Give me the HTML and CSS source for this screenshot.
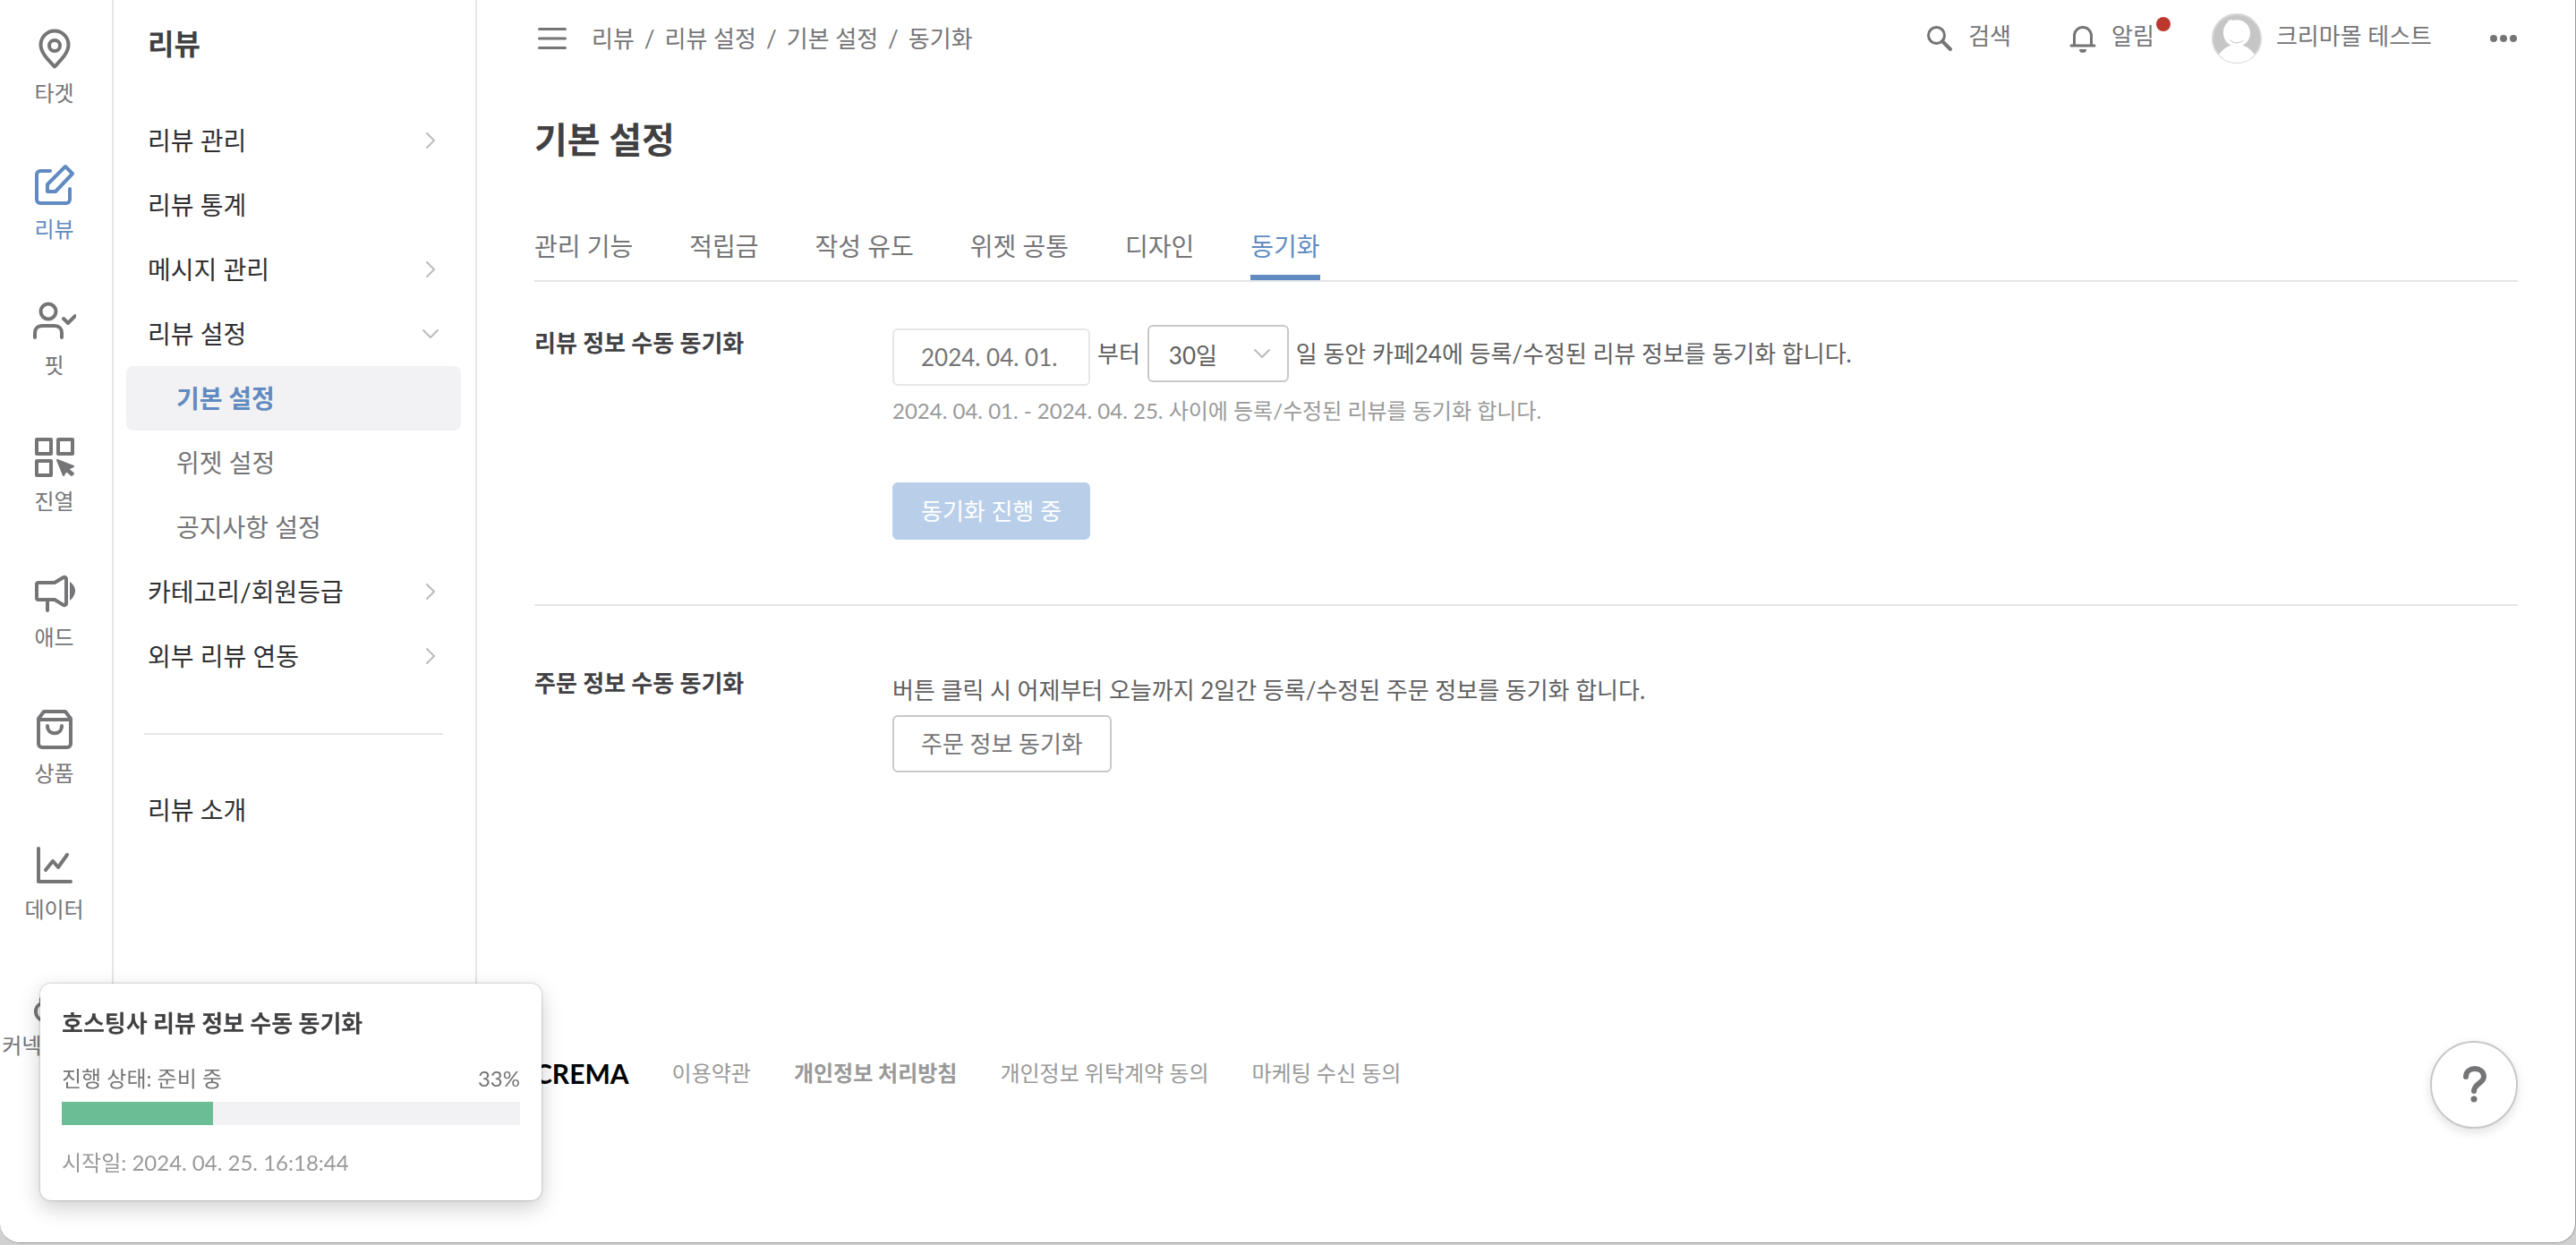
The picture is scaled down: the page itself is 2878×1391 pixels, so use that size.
FILE: index.html
```
<!DOCTYPE html>
<html lang="ko">
<head>
    <meta charset="UTF-8">
    <meta name="viewport" content="width=device-width, initial-scale=1.0">
    <title>기본 설정 - CREMA</title>
    <link rel="stylesheet" href="styles.css">
</head>
<body>
    <div class="window">
        <nav class="rail">
            <a class="rail-item" href="#">
                <svg class="rail-icon" viewBox="0 0 48 48"><path d="M24 44.500C17 37 8.500 29 8.500 20a15.500 15.500 0 0 1 31 0c0 9-8.500 17-15.500 24.500z"/><circle cx="24" cy="21" r="6"/></svg>
                타겟
            </a>
            <a class="rail-item active" href="#">
                <svg class="rail-icon" viewBox="0 0 48 48"><path d="M19 9H8a4 4 0 0 0-4 4v28a4 4 0 0 0 4 4h29a4 4 0 0 0 4-4V29"/><path d="M36 4l8 8-19 20h-9v-8z"/></svg>
                리뷰
            </a>
            <a class="rail-item" href="#">
                <svg class="rail-icon" viewBox="0 0 48 48"><circle cx="17" cy="14" r="8.500"/><path d="M2 43v-5c0-5 3-8 8-8h14c5 0 8 3 8 8v5M34 22l5 5 8-8"/></svg>
                핏
            </a>
            <a class="rail-item" href="#">
                <svg class="rail-icon" viewBox="0 0 48 48"><path d="M4 5h16v16H4zM28 5h16v16H28zM4 29h16v16H4z"/><path class="solid" d="M27 28l18 7-6 3 6 5-2 2-6-5-3 5z"/></svg>
                진열
            </a>
            <a class="rail-item" href="#">
                <svg class="rail-icon" viewBox="0 0 48 48"><path d="M24 13H6a2 2 0 0 0-2 2v15a2 2 0 0 0 2 2h18l10 6a2 2 0 0 0 3-2V9a2 2 0 0 0-3-2zM16 32v12"/><path class="fill" d="M41 12c3 2 6 6 6 10s-3 9-6 11z"/></svg>
                애드
            </a>
            <a class="rail-item" href="#">
                <svg class="rail-icon" viewBox="0 0 48 48"><path d="M6 13v28a4 4 0 0 0 4 4h28a4 4 0 0 0 4-4V13l-6-8H12zM6 14h36"/><path d="M16 21c0 11 16 11 16 0"/></svg>
                상품
            </a>
            <a class="rail-item" href="#">
                <svg class="rail-icon" viewBox="0 0 48 48"><path d="M6 6v37h36M14 30l8-10 6 7 10-14"/></svg>
                데이터
            </a>
            <a class="rail-item" href="#">
                <svg class="rail-icon" viewBox="0 0 48 48"><path d="M9 22v5a10 10 0 0 0 2 19h26a10 10 0 0 0 2-19v-5"/></svg>
                커넥트 채널
            </a>
        </nav>

        <nav class="menu">
            <h2 class="menu-title">리뷰</h2>
            <a class="menu-item" href="#">리뷰 관리 <svg class="chevron" viewBox="0 0 20 20"><path d="M6 2l8 8-8 8"/></svg></a>
            <a class="menu-item" href="#">리뷰 통계</a>
            <a class="menu-item" href="#">메시지 관리 <svg class="chevron" viewBox="0 0 20 20"><path d="M6 2l8 8-8 8"/></svg></a>
            <a class="menu-item" href="#">리뷰 설정 <svg class="chevron" viewBox="0 0 20 20"><path d="M2 6l8 8 8-8"/></svg></a>
            <a class="menu-item sub active" href="#">기본 설정</a>
            <a class="menu-item sub" href="#">위젯 설정</a>
            <a class="menu-item sub" href="#">공지사항 설정</a>
            <a class="menu-item" href="#">카테고리/회원등급 <svg class="chevron" viewBox="0 0 20 20"><path d="M6 2l8 8-8 8"/></svg></a>
            <a class="menu-item" href="#">외부 리뷰 연동 <svg class="chevron" viewBox="0 0 20 20"><path d="M6 2l8 8-8 8"/></svg></a>
            <hr class="menu-divider">
            <a class="menu-item" href="#">리뷰 소개</a>
        </nav>

        <div class="content">
            <header class="topbar">
                <button class="icon-button" type="button" aria-label="메뉴">
                    <svg class="hamburger" viewBox="0 0 32 24"><path d="M1.500 1.500h29M1.500 12h29M1.500 22.500h29"/></svg>
                </button>
                <div class="breadcrumb">
                    <a href="#">리뷰</a><span>/</span><a href="#">리뷰 설정</a><span>/</span><a href="#">기본 설정</a><span>/</span><a href="#">동기화</a>
                </div>
                <div class="tools">
                    <a class="tool" href="#">
                        <svg class="tool-icon" viewBox="0 0 32 32"><circle cx="12.500" cy="12.500" r="9"/><path class="thick" d="M19 19l9 9"/></svg>
                        <span>검색</span>
                    </a>
                    <a class="tool" href="#">
                        <svg class="tool-icon" viewBox="0 0 32 32"><path d="M3 24h26M6.500 23V13a9.500 9.500 0 0 1 19 0v10"/><path class="fill" d="M12 28h8a4 4 0 0 1-8 0z"/></svg>
                        <span class="alarm">알림</span>
                    </a>
                    <a class="tool" href="#">
                        <svg class="avatar" viewBox="0 0 56 56">
                            <circle cx="28" cy="28" r="27" fill="#c6c6c6" stroke="#d6d6d6" stroke-width="2"/>
                            <path d="M8 46c4-6 9-9 15-11h10c6 2 11 5 15 11-5 6-12 9-20 9s-15-3-20-9z" fill="#fff"/>
                            <path d="M13 22c0-7 3-11 6-13l-1-2 3 1 1-2 1 2c11-3 20 4 20 14 0 8-6 15-15 15s-15-7-15-15z" fill="#fff"/>
                            <path d="M21 30c4 4 10 4 14 0" fill="none" stroke="#c6c6c6" stroke-width="1"/>
                        </svg>
                        <span>크리마몰 테스트</span>
                    </a>
                    <button class="icon-button" type="button" aria-label="더보기">
                        <svg class="more" viewBox="0 0 32 32"><circle cx="5" cy="16" r="4"/><circle cx="16" cy="16" r="4"/><circle cx="27" cy="16" r="4"/></svg>
                    </button>
                </div>
            </header>

            <main>
                <h1 class="page-title">기본 설정</h1>
                <div class="tabs">
                    <a class="tab" href="#">관리 기능</a>
                    <a class="tab" href="#">적립금</a>
                    <a class="tab" href="#">작성 유도</a>
                    <a class="tab" href="#">위젯 공통</a>
                    <a class="tab" href="#">디자인</a>
                    <a class="tab active" href="#">동기화</a>
                </div>

                <section class="setting">
                    <h3 class="setting-name">리뷰 정보 수동 동기화</h3>
                    <div class="setting-body">
                        <div class="sync-row">
                            <input class="date-input" id="start-date" type="text" value="2024. 04. 01." readonly>
                            <label for="start-date">부터</label>
                            <span class="select-wrap">
                                <select class="select" id="days">
                                    <option>30일</option>
                                </select>
                                <svg class="select-arrow" viewBox="0 0 20 20"><path d="M2 6l8 8 8-8"/></svg>
                            </span>
                            <label for="days">일 동안 카페24에 등록/수정된 리뷰 정보를 동기화 합니다.</label>
                        </div>
                        <p class="hint">2024. 04. 01. - 2024. 04. 25. 사이에 등록/수정된 리뷰를 동기화 합니다.</p>
                        <button class="button primary" type="button" disabled>동기화 진행 중</button>
                    </div>
                </section>

                <section class="setting">
                    <h3 class="setting-name">주문 정보 수동 동기화</h3>
                    <div class="setting-body">
                        <p class="description">버튼 클릭 시 어제부터 오늘까지 2일간 등록/수정된 주문 정보를 동기화 합니다.</p>
                        <button class="button" type="button">주문 정보 동기화</button>
                    </div>
                </section>
            </main>

            <footer class="footer">
                <span class="logo">CREMA</span>
                <a href="#">이용약관</a>
                <a href="#"><b>개인정보 처리방침</b></a>
                <a href="#">개인정보 위탁계약 동의</a>
                <a href="#">마케팅 수신 동의</a>
            </footer>
        </div>
    </div>

    <button class="help" type="button" aria-label="도움말">
        <svg class="help-icon" viewBox="0 0 48 48"><path d="M15 15c0-12 20-12 20 0 0 7-11 8-11 16"/><circle cx="24" cy="40" r="3.500"/></svg>
    </button>

    <div class="progress-card">
        <h4 class="progress-title">호스팅사 리뷰 정보 수동 동기화</h4>
        <div class="progress-status">
            <span>진행 상태: 준비 중</span>
            <span>33%</span>
        </div>
        <div class="progress-bar">
            <div class="progress-fill" style="width: 33%"></div>
        </div>
        <p class="progress-date">시작일: 2024. 04. 25. 16:18:44</p>
    </div>
</body>
</html>
```
FILE: styles.css
```
* {
    box-sizing: border-box;
}
body {
    margin: 0;
    padding-bottom: 2px;
    background-color: #d0d0d0;
    font-family: Lato, "Noto Sans CJK KR", sans-serif;
    font-size: 26px;
    line-height: 40px;
    color: #5f5f61;
}
a {
    color: inherit;
    text-decoration: none;
}
h1, h2, h3, h4, p {
    margin: 0;
}
button, input, select {
    font-family: inherit;
    font-size: inherit;
    line-height: inherit;
    color: inherit;
}
svg {
    display: block;
    flex-shrink: 0;
    fill: none;
    stroke: currentColor;
    stroke-width: 4;
    stroke-linecap: round;
    stroke-linejoin: round;
}
.fill {
    fill: currentColor;
    stroke: none;
}
.solid {
    fill: currentColor;
    stroke-width: 2;
}
.window {
    display: flex;
    min-height: calc(100vh - 2px);
    padding-bottom: 96px;
    background-color: #fff;
    border-right: 1px solid #999;
    border-bottom: 1px solid #999;
    border-radius: 0 0 22px 22px;
}

/* icon rail */
.rail {
    width: 127px;
    flex-shrink: 0;
    display: flex;
    flex-direction: column;
    gap: 60px;
    padding: 30px 4px 0 0;
    border-right: 2px solid #e6e6e6;
    color: #757577;
}
.rail-item {
    display: flex;
    flex-direction: column;
    align-items: center;
    gap: 8px;
    font-size: 24px;
    line-height: 36px;
    white-space: nowrap;
}
.rail-item.active {
    color: #618bc0;
}
.rail-icon {
    width: 48px;
    height: 48px;
}

/* side menu */
.menu {
    width: 406px;
    flex-shrink: 0;
    padding: 25px 16px 0 14px;
    border-right: 2px solid #e6e6e6;
}
.menu-title {
    margin-bottom: 48px;
    padding-left: 24px;
    font-size: 32px;
    line-height: 48px;
    color: #414143;
}
.menu-item {
    display: flex;
    align-items: center;
    justify-content: space-between;
    height: 72px;
    padding: 0 24px;
    border-radius: 8px;
    font-size: 28px;
    color: #303032;
}
.menu-item.sub {
    padding-left: 56px;
    color: #757577;
}
.menu-item.sub.active {
    background-color: #f2f2f4;
    font-weight: 700;
    color: #618bc0;
}
.chevron {
    width: 20px;
    height: 20px;
    stroke: #bbb;
    stroke-width: 2;
}
.menu-divider {
    margin: 50px 20px 48px;
    border: 0;
    border-top: 2px solid #e6e6e6;
}

/* top bar */
.content {
    flex-grow: 1;
    padding: 0 64px;
}
.topbar {
    display: flex;
    align-items: center;
    height: 86px;
    color: #757577;
}
.icon-button {
    padding: 0;
    border: 0;
    background: none;
}
.hamburger {
    width: 32px;
    height: 24px;
    margin: 0 4px;
    stroke-width: 3;
}
.breadcrumb {
    display: flex;
    gap: 11px;
    margin-left: 24px;
}
.tools {
    display: flex;
    align-items: center;
    gap: 64px;
    margin-left: auto;
}
.tool {
    display: flex;
    align-items: center;
    gap: 16px;
}
.tool span {
    padding-bottom: 6px;
}
.tool-icon {
    width: 32px;
    height: 32px;
    stroke-width: 3;
}
.thick {
    stroke-width: 4;
}
.alarm {
    position: relative;
}
.alarm::after {
    content: "";
    position: absolute;
    top: -1px;
    right: -18px;
    width: 16px;
    height: 16px;
    border-radius: 50%;
    background-color: #bc372e;
}
.avatar {
    width: 56px;
    height: 56px;
    stroke: none;
}
.more {
    width: 32px;
    height: 32px;
    fill: currentColor;
    stroke: none;
}

/* page */
.page-title {
    padding: 40px 0;
    font-size: 40px;
    line-height: 60px;
    color: #414143;
}
.tabs {
    display: flex;
    gap: 63px;
    margin-top: 26px;
    border-bottom: 2px solid #e6e6e6;
    font-size: 28px;
    color: #757577;
}
.tab {
    padding-bottom: 9px;
    line-height: 46px;
    border-bottom: 6px solid transparent;
}
.tab.active {
    color: #618bc0;
    border-bottom-color: #618bc0;
}
.setting {
    display: flex;
    padding: 48px 0 72px;
}
.setting + .setting {
    padding-top: 66px;
    border-top: 2px solid #e6e6e6;
}
.setting-name {
    width: 400px;
    flex-shrink: 0;
    font-size: 26px;
    color: #414143;
}
.sync-row {
    display: flex;
    align-items: flex-start;
    gap: 8px;
    line-height: 64px;
}
.date-input {
    width: 221px;
    height: 64px;
    margin-top: 4px;
    padding: 0 30px;
    border: 2px solid #e6e6e6;
    border-radius: 6px;
    background-color: #fff;
    color: #757577;
}
.select-wrap {
    position: relative;
}
.select {
    display: block;
    width: 158px;
    height: 64px;
    padding: 0 22px;
    border: 2px solid #c8c8c8;
    border-radius: 6px;
    background-color: #fff;
    appearance: none;
}
.select-arrow {
    position: absolute;
    top: 22px;
    right: 20px;
    width: 20px;
    height: 20px;
    stroke: #bbb;
    stroke-width: 2;
    pointer-events: none;
}
.hint {
    margin: 8px 0 60px;
    font-size: 24px;
    color: #999;
}
.description {
    margin: 8px 0;
}
.button {
    display: block;
    height: 64px;
    padding: 0 30px;
    border: 2px solid #c8c8c8;
    border-radius: 6px;
    background-color: #fff;
    color: #757577;
}
.button.primary {
    border-color: #b9cfe9;
    background-color: #b9cfe9;
    color: #fff;
}

/* footer */
.footer {
    display: flex;
    align-items: center;
    gap: 48px;
    margin-top: 244px;
    font-size: 24px;
    color: #999;
}
.logo {
    font-size: 30px;
    font-weight: 700;
    color: #000;
}

/* floating parts */
.help {
    position: fixed;
    right: 65px;
    bottom: 130px;
    display: flex;
    align-items: center;
    justify-content: center;
    width: 98px;
    height: 98px;
    padding: 0;
    border: 2px solid #c8c8c8;
    border-radius: 50%;
    background-color: #fff;
    box-shadow: 0 4px 12px rgba(0, 0, 0, 0.12);
    color: #757577;
}
.help-icon {
    width: 48px;
    height: 48px;
    stroke-width: 6;
}
.help-icon circle {
    fill: currentColor;
    stroke: none;
}
.progress-card {
    position: fixed;
    left: 45px;
    bottom: 50px;
    width: 560px;
    padding: 24px 24px 22px;
    border-radius: 12px;
    background-color: #fff;
    box-shadow: 0 0 2px 1px rgba(0, 0, 0, 0.14), 0 8px 24px rgba(0, 0, 0, 0.2);
}
.progress-title {
    margin-bottom: 22px;
    font-size: 26px;
    color: #414143;
}
.progress-status {
    display: flex;
    justify-content: space-between;
    margin-bottom: 6px;
    font-size: 24px;
    color: #757577;
}
.progress-bar {
    height: 26px;
    background-color: #f2f2f4;
}
.progress-fill {
    height: 100%;
    background-color: #6bbd95;
}
.progress-date {
    margin-top: 22px;
    font-size: 24px;
    color: #999;
}
```
